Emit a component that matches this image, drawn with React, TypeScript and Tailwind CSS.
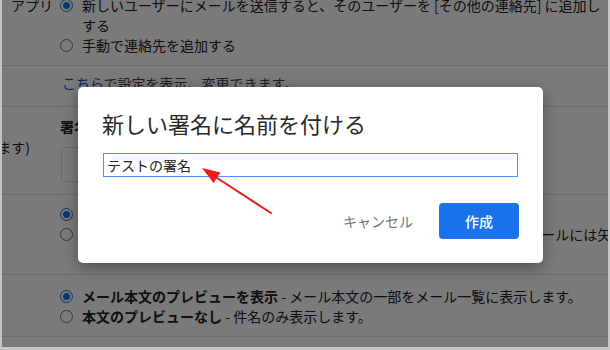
import React from "react";

function Radio({ on }: { on?: boolean }) {
  return on ? (
    <span className="w-[13px] h-[13px] shrink-0 rounded-full border border-[#1a73e8] flex items-center justify-center">
      <span className="w-[7px] h-[7px] rounded-full bg-[#1a73e8]" />
    </span>
  ) : (
    <span className="w-[13px] h-[13px] shrink-0 rounded-full border border-[#6f6f6f]" />
  );
}

function RadioRow({ on, children }: { on?: boolean; children: React.ReactNode }) {
  return (
    <div className="flex items-center h-[20px] whitespace-nowrap">
      <Radio on={on} />
      <span className="ml-[9px]">{children}</span>
    </div>
  );
}

export default function App() {
  return (
    <div className="relative w-[610px] h-[350px] border-x-2 border-b-[3px] border-[#c4c4c4] overflow-hidden font-['Noto_Sans_CJK_JP','Noto_Sans',sans-serif] text-[14px] text-[#222]">
      <div className="h-full bg-white overflow-hidden">
        {/* section 1 */}
        <div className="h-[66px] border-b border-[#dfdfdf] flex">
          <div className="w-[58px] shrink-0 -mt-[5px] leading-[20px] flex justify-end pr-[7px] whitespace-nowrap overflow-hidden">
            アプリ
          </div>
          <div className="flex-1 min-w-0 -mt-[5px] leading-[20px] overflow-hidden">
            <div className="flex items-center h-[20px] whitespace-nowrap">
              <Radio on />
              <span className="ml-[9px]">新しいユーザーにメールを送信すると、そのユーザーを [その他の連絡先] に追加し</span>
            </div>
            <div className="h-[20px] pl-[22px]">する</div>
            <div className="flex items-center h-[20px] whitespace-nowrap">
              <Radio />
              <span className="ml-[9px]">手動で連絡先を追加する</span>
            </div>
          </div>
        </div>
        {/* section 2 */}
        <div className="h-[41px] border-b border-[#dfdfdf] flex">
          <div className="w-[58px] shrink-0" />
          <div className="pt-[7px] pl-[2px] leading-[20px] text-[#444]">
            <span className="text-[#1155cc]">こちら</span>で設定を表示、変更できます。
          </div>
        </div>
        {/* section 3 */}
        <div className="h-[88px] border-b border-[#dfdfdf] flex">
          <div className="w-[58px] shrink-0 pt-[30px] pr-[30px] leading-[20px] flex justify-end whitespace-nowrap overflow-hidden">
            (署名は送信メールの末尾に追加されます)
          </div>
          <div className="flex-1 min-w-0 pt-[9px] leading-[20px]">
            <div className="font-bold">署名</div>
            <div className="mt-[11px] ml-[1px] w-[480px] h-[35px] border border-[#dadce0] rounded-[4px]" />
          </div>
        </div>
        {/* section 4 */}
        <div className="h-[80px] border-b border-[#dfdfdf] flex">
          <div className="w-[58px] shrink-0" />
          <div className="flex-1 min-w-0 pt-[9px] leading-[20px] overflow-hidden">
            <RadioRow on>
              <b>インジケータなし</b>
            </RadioRow>
            <RadioRow>
              <b>インジケータを表示</b> - 自分のアドレス宛て（メーリングリスト以外）のメールには矢印（›）が表示されます。
            </RadioRow>
          </div>
        </div>
        {/* section 5 */}
        <div className="h-[62px] border-b border-[#dfdfdf] flex">
          <div className="w-[58px] shrink-0" />
          <div className="flex-1 min-w-0 pt-[11px] leading-[20px] overflow-hidden">
            <RadioRow on>
              <b>メール本文のプレビューを表示</b> - メール本文の一部をメール一覧に表示します。
            </RadioRow>
            <RadioRow>
              <b>本文のプレビューなし</b> - 件名のみ表示します。
            </RadioRow>
          </div>
        </div>
      </div>

      {/* overlay */}
      <div className="absolute inset-0 bg-black/[0.52]" />

      {/* dialog */}
      <div className="absolute left-[76px] top-[87px] w-[465px] bg-white rounded-[5px] shadow-[0_4px_16px_rgba(0,0,0,0.35)] p-[24px]">
        <div className="text-[22px] leading-[24px] text-[#2a2a2a]">新しい署名に名前を付ける</div>
        <div className="mt-[18px] ml-[1px] w-[415px] h-[24px] border border-[#4d90fe] flex items-center pl-[3px] text-[14px] text-[#222]">
          テストの署名
        </div>
        <div className="mt-[26px] flex justify-end items-center">
          <span className="mr-[26px] text-[#70757a] text-[14px]">キャンセル</span>
          <div className="w-[80px] h-[36px] rounded-[4px] bg-[#1a73e8] text-white font-medium flex items-center justify-center text-[14px]">
            作成
          </div>
        </div>
      </div>

      {/* arrow */}
      <svg className="absolute left-[-2px] top-0 pointer-events-none" width="610" height="350" viewBox="0 0 610 350">
        <line x1="271" y1="213" x2="214" y2="176" stroke="#f21b1b" strokeWidth="2" strokeLinecap="round" />
        <polygon points="202,168 220.5,172.5 213.5,183" fill="#f21b1b" />
      </svg>
    </div>
  );
}
